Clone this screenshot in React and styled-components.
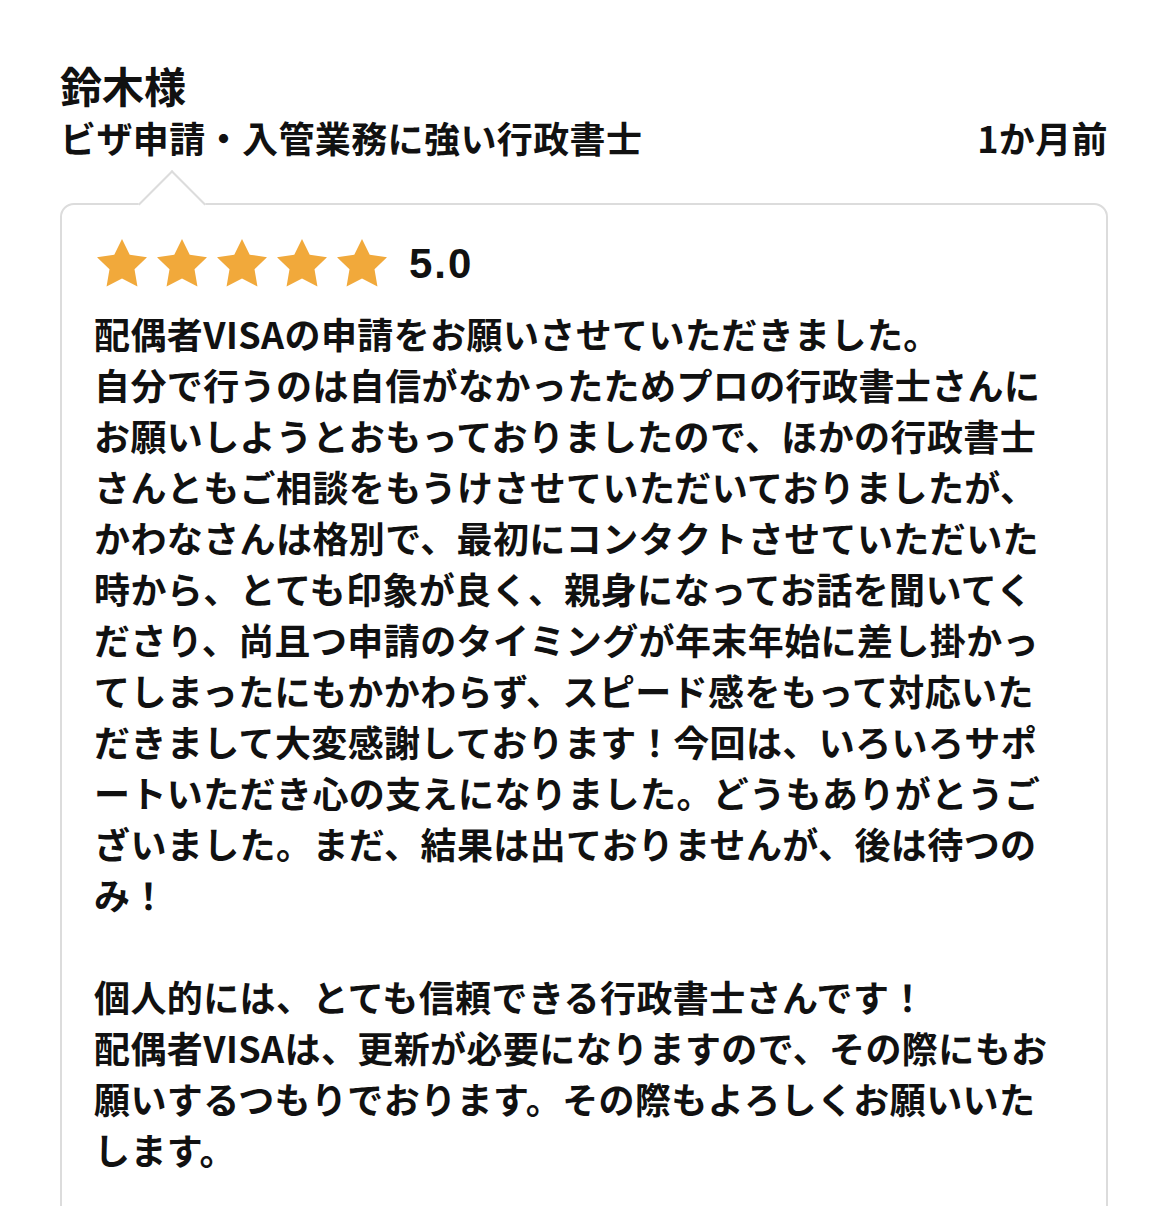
import React from 'react';
import styled, { createGlobalStyle } from 'styled-components';

const GlobalStyle = createGlobalStyle`
  body {
    margin: 0;
    background: #fff;
    color: #111;
    font-family: "Noto Sans CJK JP", "Noto Sans", sans-serif;
  }
`;

const reviewLines = [
  ['配偶者VISAの申請をお願いさせていただきました。',
    '自分で行うのは自信がなかったためプロの行政書士さんに',
    'お願いしようとおもっておりましたので、ほかの行政書士',
    'さんともご相談をもうけさせていただいておりましたが、',
    'かわなさんは格別で、最初にコンタクトさせていただいた',
    '時から、とても印象が良く、親身になってお話を聞いてく',
    'ださり、尚且つ申請のタイミングが年末年始に差し掛かっ',
    'てしまったにもかかわらず、スピード感をもって対応いた',
    'だきまして大変感謝しております！今回は、いろいろサポ',
    'ートいただき心の支えになりました。どうもありがとうご',
    'ざいました。まだ、結果は出ておりませんが、後は待つの',
    'み！'],
  ['個人的には、とても信頼できる行政書士さんです！',
    '配偶者VISAは、更新が必要になりますので、その際にもお',
    '願いするつもりでおります。その際もよろしくお願いいた',
    'します。'],
];

const Star = () => (
  <StarIcon viewBox="2 2 20 19.2">
    <path d="M12 2l3.09 6.26L22 9.27l-5 4.87 1.18 6.88L12 17.77l-6.18 3.25L7 14.14 2 9.27l6.91-1.01L12 2z" />
  </StarIcon>
);

const App = () => {
  return (
    <Page>
      <GlobalStyle />
      <Name>鈴木様</Name>
      <MetaRow>
        <Title>ビザ申請・入管業務に強い行政書士</Title>
        <When>1か月前</When>
      </MetaRow>
      <Card>
        <Rating>
          <Stars>
            {[0, 1, 2, 3, 4].map((i) => <Star key={i} />)}
          </Stars>
          <Score>5.0</Score>
        </Rating>
        <Body>
          {reviewLines.map((para, i) => (
            <Paragraph key={i}>
              {para.map((line, j) => (
                <Line key={j}>{line}</Line>
              ))}
            </Paragraph>
          ))}
        </Body>
      </Card>
    </Page>
  );
};

const Page = styled.div`
  padding: 60px 61px 0 60px;
  overflow: hidden;
`;

const Name = styled.div`
  font-size: 42px;
  font-weight: 700;
  line-height: 50px;
`;

const MetaRow = styled.div`
  display: flex;
  justify-content: space-between;
  align-items: center;
  margin-top: 2px;
  font-size: 36px;
  font-weight: 700;
  line-height: 50px;
  letter-spacing: 0.4px;
`;

const Title = styled.div``;

const When = styled.div``;

const Card = styled.div`
  position: relative;
  margin-top: 41px;
  border: 2px solid #dcdcdc;
  border-radius: 14px;
  padding: 33px 32px 80px;

  &::before {
    content: '';
    position: absolute;
    top: -25px;
    left: 86px;
    width: 46px;
    height: 46px;
    background: #fff;
    border-top: 2px solid #dcdcdc;
    border-left: 2px solid #dcdcdc;
    transform: rotate(45deg);
  }
`;

const Rating = styled.div`
  position: relative;
  display: flex;
  align-items: center;
  gap: 22px;
  padding-left: 3px;
`;

const Stars = styled.div`
  display: flex;
  gap: 10px;
`;

const StarIcon = styled.svg`
  width: 50px;
  height: 48px;
  fill: #f1a93b;
`;

const Score = styled.div`
  font-family: "Liberation Sans", Arial, sans-serif;
  font-size: 42px;
  font-weight: 700;
  letter-spacing: 2px;
  margin-top: 2px;
`;

const Body = styled.div`
  margin-top: 20px;
  font-size: 36px;
  font-weight: 700;
  line-height: 51px;
  letter-spacing: 0.4px;
`;

const Paragraph = styled.p`
  margin: 0 0 51px;
`;

const Line = styled.span`
  display: block;
  white-space: nowrap;
`;

export default App;
